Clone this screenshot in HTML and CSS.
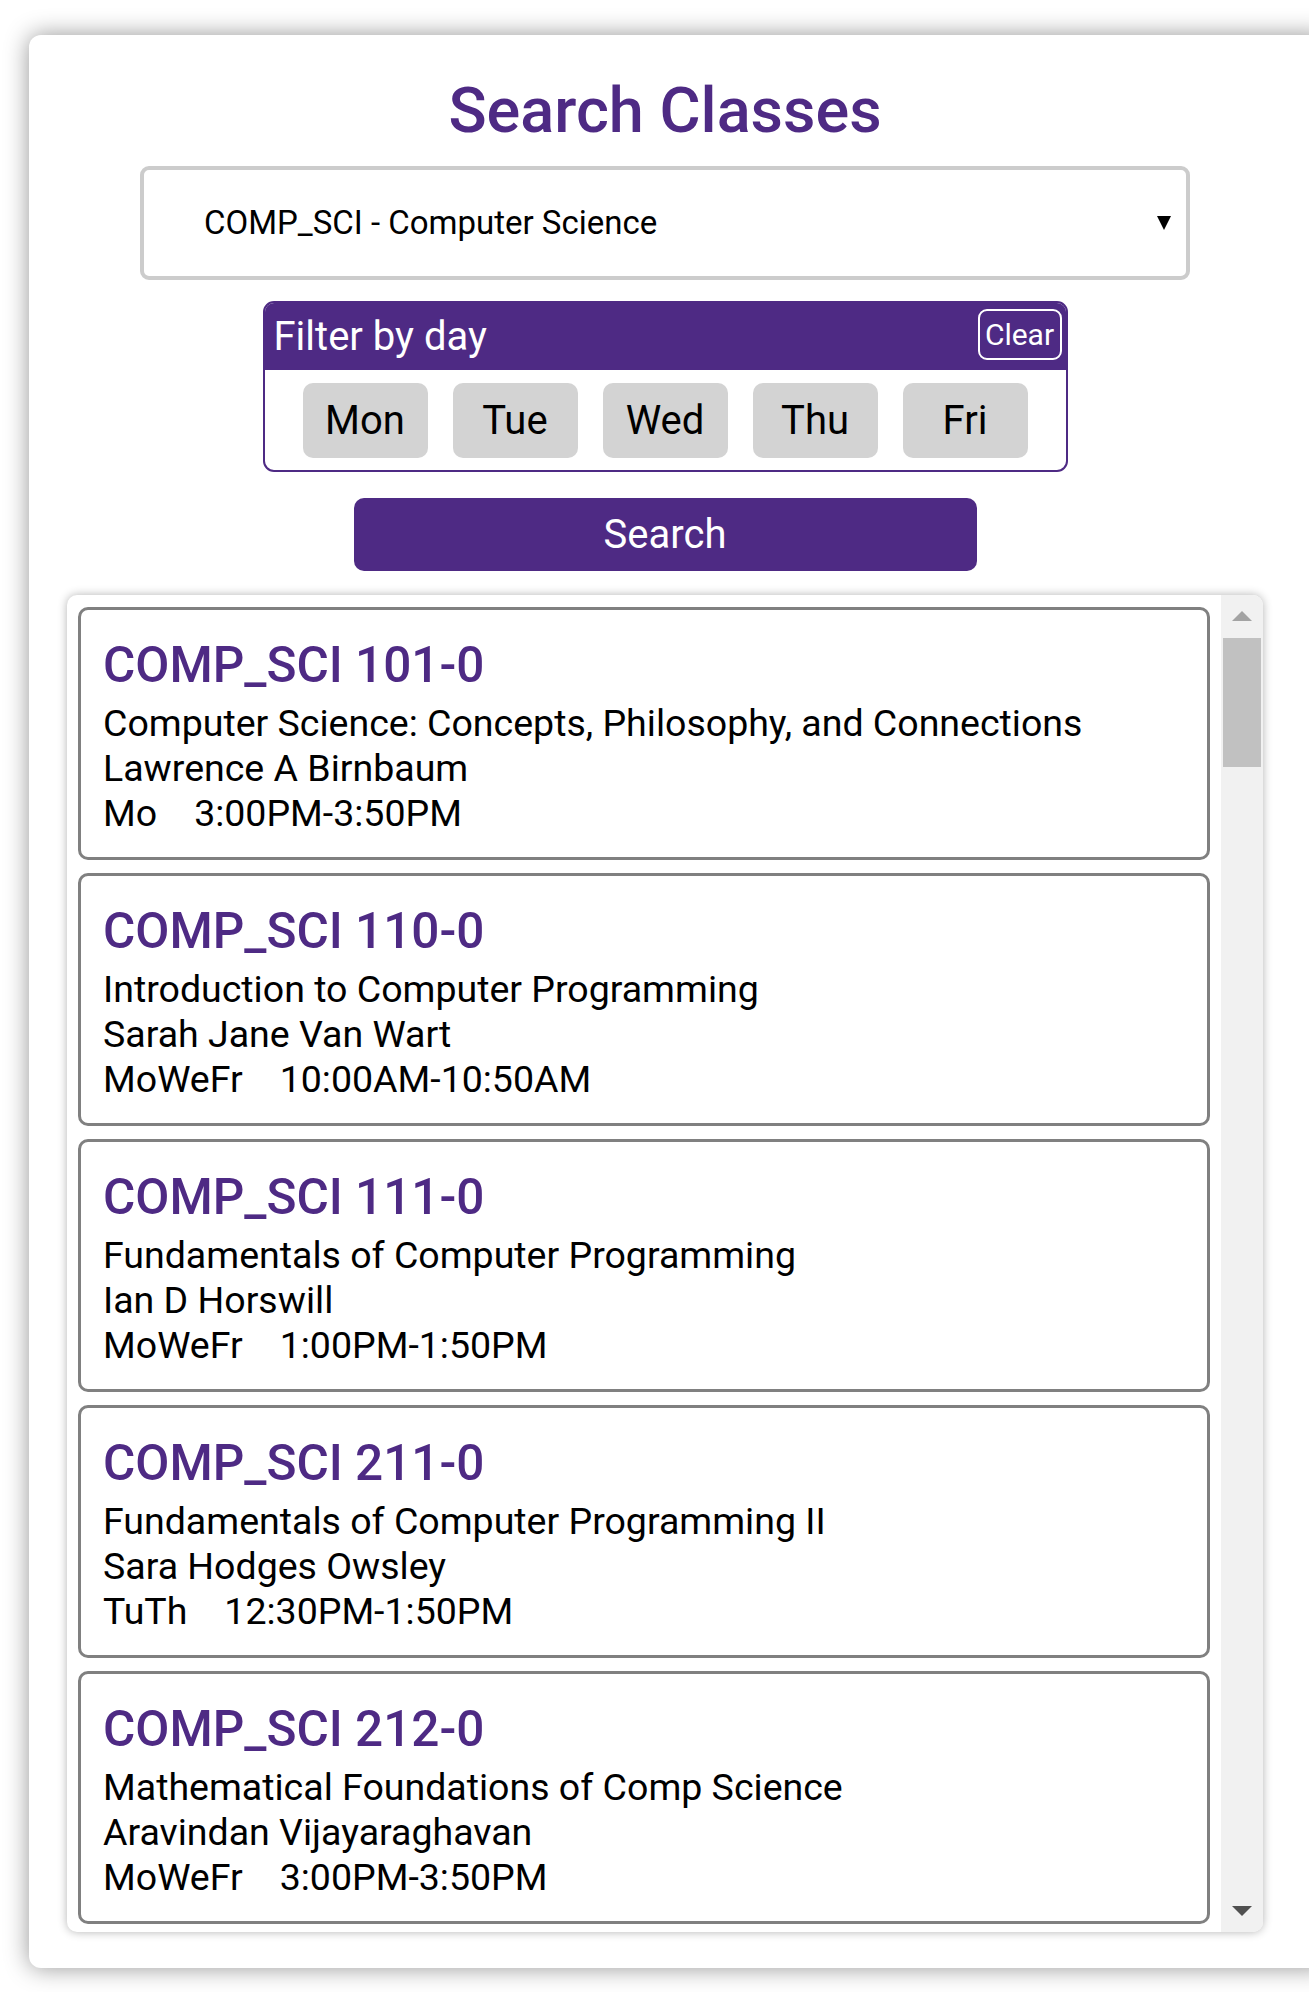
FILE: index.html
```html
<!DOCTYPE html>
<html lang="en">
<head>
<meta charset="utf-8">
<title>Search Classes</title>
<link rel="stylesheet" href="styles.css">
</head>
<body>
<div class="page">
  <div class="panel">
    <div class="panel-inner">
      <h1 class="title">Search Classes</h1>
      <div class="select">
        <span class="select-text">COMP_SCI - Computer Science</span>
        <svg class="select-arrow" width="14" height="14" viewBox="0 0 14 14"><polygon points="0,0 14,0 7,14" fill="#000"/></svg>
      </div>
      <div class="filter">
        <div class="filter-head">
          <span class="filter-label">Filter by day</span>
          <button class="clear">Clear</button>
        </div>
        <div class="days">
          <button class="day">Mon</button>
          <button class="day">Tue</button>
          <button class="day">Wed</button>
          <button class="day">Thu</button>
          <button class="day">Fri</button>
        </div>
      </div>
      <button class="search">Search</button>
      <div class="results">
        <div class="results-list">
          <div class="course">
            <h2 class="course-title">COMP_SCI 101-0</h2>
            <div class="course-line">Computer Science: Concepts, Philosophy, and Connections</div>
            <div class="course-line">Lawrence A Birnbaum</div>
            <div class="course-line"><span class="days-text">Mo</span>3:00PM-3:50PM</div>
          </div>
          <div class="course">
            <h2 class="course-title">COMP_SCI 110-0</h2>
            <div class="course-line">Introduction to Computer Programming</div>
            <div class="course-line">Sarah Jane Van Wart</div>
            <div class="course-line"><span class="days-text">MoWeFr</span>10:00AM-10:50AM</div>
          </div>
          <div class="course">
            <h2 class="course-title">COMP_SCI 111-0</h2>
            <div class="course-line">Fundamentals of Computer Programming</div>
            <div class="course-line">Ian D Horswill</div>
            <div class="course-line"><span class="days-text">MoWeFr</span>1:00PM-1:50PM</div>
          </div>
          <div class="course">
            <h2 class="course-title">COMP_SCI 211-0</h2>
            <div class="course-line">Fundamentals of Computer Programming II</div>
            <div class="course-line">Sara Hodges Owsley</div>
            <div class="course-line"><span class="days-text">TuTh</span>12:30PM-1:50PM</div>
          </div>
          <div class="course">
            <h2 class="course-title">COMP_SCI 212-0</h2>
            <div class="course-line">Mathematical Foundations of Comp Science</div>
            <div class="course-line">Aravindan Vijayaraghavan</div>
            <div class="course-line"><span class="days-text">MoWeFr</span>3:00PM-3:50PM</div>
          </div>
        </div>
        <div class="scrollbar">
          <div class="sb-button">
            <svg width="20" height="10" viewBox="0 0 20 10"><polygon points="10,0 20,10 0,10" fill="#a3a3a3"/></svg>
          </div>
          <div class="sb-thumb"></div>
          <div class="sb-space"></div>
          <div class="sb-button">
            <svg width="20" height="10" viewBox="0 0 20 10"><polygon points="0,0 20,0 10,10" fill="#505050"/></svg>
          </div>
        </div>
      </div>
    </div>
  </div>
</div>
</body>
</html>
```
FILE: styles.css
```css
html, body {
  margin: 0;
  padding: 0;
  background: #ffffff;
  overflow: hidden;
}

body {
  font-family: Roboto, "Liberation Sans", Arial, sans-serif;
  color: #000;
}

.page {
  padding: 35px 0 24px 29px;
}

.panel {
  width: 1300px;
  box-sizing: border-box;
  background: #fff;
  border-radius: 12px;
  box-shadow: 0 0 24px rgba(0, 0, 0, 0.42);
  padding: 38px 0 36px 38px;
}

.panel-inner {
  width: 1196px;
  display: flex;
  flex-direction: column;
  align-items: center;
}

.title {
  margin: 0;
  font-size: 63px;
  line-height: 75px;
  font-weight: 500;
  color: #4e2a84;
}

.select {
  margin-top: 18px;
  width: 1050px;
  height: 114px;
  box-sizing: border-box;
  border: 4px solid #cccccc;
  border-radius: 9px;
  display: flex;
  align-items: center;
  justify-content: space-between;
  padding: 0 15px 0 60px;
}

.select-text {
  font-size: 33px;
  line-height: 38px;
}

.select-arrow {
  display: block;
}

.filter {
  margin-top: 21px;
  width: 805px;
  box-sizing: border-box;
  border: 2px solid #4e2a84;
  border-radius: 11px;
  overflow: hidden;
}

.filter-head {
  height: 67px;
  background: #4e2a84;
  display: flex;
  align-items: center;
  justify-content: space-between;
  padding: 0 4px 0 9px;
}

.filter-label {
  color: #fff;
  font-size: 40px;
  line-height: 47px;
}

.clear {
  width: 84px;
  height: 51px;
  box-sizing: border-box;
  border: 2px solid #fff;
  border-radius: 9px;
  background: transparent;
  color: #fff;
  font-family: inherit;
  font-size: 30px;
  padding: 0;
  margin-bottom: 4px;
}

.days {
  display: flex;
  justify-content: center;
  gap: 25px;
  padding: 13px 0 12px;
}

.day {
  width: 125px;
  height: 75px;
  border: none;
  border-radius: 10px;
  background: #d3d3d3;
  color: #000;
  font-family: inherit;
  font-size: 40px;
  padding: 0;
}

.search {
  margin-top: 26px;
  width: 623px;
  height: 73px;
  border: none;
  border-radius: 10px;
  background: #4e2a84;
  color: #fff;
  font-family: inherit;
  font-size: 40px;
  padding: 0;
}

.results {
  margin-top: 24px;
  width: 1196px;
  height: 1337px;
  display: flex;
  border-radius: 10px;
  overflow: hidden;
  background: #fff;
  box-shadow: 0 0 10px rgba(0, 0, 0, 0.3);
}

.results-list {
  flex: 1;
  overflow: hidden;
  padding: 12px 11px;
  display: flex;
  flex-direction: column;
  gap: 13px;
}

.course {
  flex: none;
  border: 3px solid #808080;
  border-radius: 10px;
  padding: 25px 22px 21px;
}

.course-title {
  margin: 0 0 6px;
  font-size: 49.5px;
  line-height: 60px;
  font-weight: 500;
  color: #4e2a84;
}

.course-line {
  font-size: 37.5px;
  line-height: 45px;
}

.days-text {
  display: inline-block;
  margin-right: 37px;
}

.scrollbar {
  width: 42px;
  flex: none;
  background: #f1f1f1;
  display: flex;
  flex-direction: column;
}

.sb-button {
  height: 42px;
  display: flex;
  align-items: center;
  justify-content: center;
}

.sb-button svg {
  display: block;
}

.sb-thumb {
  margin: 1px 2px 0;
  height: 129px;
  background: #c1c1c1;
}

.sb-space {
  flex: 1;
}
```
